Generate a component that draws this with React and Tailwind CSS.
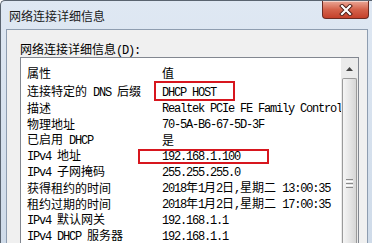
const rows = [
  ['连接特定的 DNS 后缀', 'DHCP HOST'],
  ['描述', 'Realtek PCIe FE Family Controller'],
  ['物理地址', '70-5A-B6-67-5D-3F'],
  ['已启用 DHCP', '是'],
  ['IPv4 地址', '192.168.1.100'],
  ['IPv4 子网掩码', '255.255.255.0'],
  ['获得租约的时间', '2018年1月2日,星期二 13:00:35'],
  ['租约过期的时间', '2018年1月2日,星期二 17:00:35'],
  ['IPv4 默认网关', '192.168.1.1'],
  ['IPv4 DHCP 服务器', '192.168.1.1'],
];

// Split into CJK and ASCII runs so ASCII gets the narrow 6px-per-char mono look
function T({ text }) {
  const parts = text.match(/[\x00-\x7f]+|[^\x00-\x7f]+/g) || [];
  return parts.map((p, i) =>
    /^[\x00-\x7f]/.test(p) ? (
      <span
        key={i}
        className="font-['Liberation_Mono',monospace] text-[12px] leading-[16px] tracking-[-1.2px] whitespace-pre"
      >
        {p}
      </span>
    ) : (
      <span key={i} className="leading-[16px]">{p}</span>
    )
  );
}

function CloseButton() {
  return (
    <div className="mr-[3px] flex h-[18px] w-[47px] items-center justify-center self-start rounded-b-[4px] border border-t-0 border-[#6b2b22] bg-gradient-to-b from-[#e9a797] via-[#d4624b] to-[#c4402a] shadow-[inset_0_1px_0_rgba(255,255,255,0.5)]">
      <svg width="14" height="12" viewBox="0 0 14 12">
        <path d="M3 2 L11 10 M11 2 L3 10" stroke="#4a1b14" strokeWidth="4" strokeLinecap="square" />
        <path d="M3 2 L11 10 M11 2 L3 10" stroke="#ffffff" strokeWidth="2.2" strokeLinecap="square" />
      </svg>
    </div>
  );
}

function ScrollBar() {
  return (
    <div className="flex w-[17px] flex-col bg-[#ebebeb]">
      <div className="flex h-[20px] items-center justify-center pt-[2px]">
        <svg width="7" height="4" viewBox="0 0 7 4">
          <path d="M0 4 L3.5 0 L7 4 Z" fill="#444" />
        </svg>
      </div>
      <div className="mx-[1px] flex flex-1 flex-col items-center rounded-t-[2px] border border-b-0 border-[#9a9a9a] bg-gradient-to-r from-[#f5f5f5] via-[#e6e6e6] to-[#d6d6d6] pt-[100px]">
        <div className="flex flex-col gap-[1px]">
          <div className="h-[1px] w-[7px] bg-[#8a8a8a]" />
          <div className="h-[1px] w-[7px] bg-[#fff]" />
          <div className="h-[1px] w-[7px] bg-[#8a8a8a]" />
          <div className="h-[1px] w-[7px] bg-[#fff]" />
          <div className="h-[1px] w-[7px] bg-[#8a8a8a]" />
        </div>
      </div>
    </div>
  );
}

export default function App() {
  return (
    <div className="relative h-[250px] w-[372px] overflow-hidden bg-white font-['Noto_Sans_CJK_SC',sans-serif] text-[12px] text-black">
      <div className="flex h-[243px] flex-col rounded-tl-[5px] border-l border-t border-[#5a6470] bg-gradient-to-b from-[#dfe8f3] to-[#cfdbe9]">
        {/* Title bar */}
        <div className="flex h-[28px] shrink-0 items-center justify-between">
          <span className="pl-[8px] pt-[2px] leading-[16px] text-[#1a1a1a]">网络连接详细信息</span>
          <CloseButton />
        </div>

        {/* Client area */}
        <div className="ml-[5px] mr-[4px] flex flex-1 flex-col overflow-hidden border border-b-0 border-[#8e9db0] bg-[#f0f0f0] pl-[13px] pr-[8px]">
          <div className="h-[27px] shrink-0 pt-[11px] leading-[16px]">
            <T text="网络连接详细信息(D):" />
          </div>

          <div className="flex flex-1 overflow-hidden border border-b-0 border-[#828790] bg-white">
            <div className="flex flex-1 flex-col overflow-hidden">
              <div className="flex h-[26px] shrink-0 items-end pb-[3px] pl-[6px] leading-[16px]">
                <div className="w-[135px]">属性</div>
                <div>值</div>
              </div>
              {rows.map(([k, v]) => (
                <div key={k} className="flex h-[16px] shrink-0 items-center overflow-hidden pl-[6px] leading-[16px]">
                  <div className="w-[135px] shrink-0 whitespace-nowrap">
                    <T text={k} />
                  </div>
                  <div className="flex-1 overflow-hidden whitespace-nowrap">
                    <T text={v} />
                  </div>
                </div>
              ))}
            </div>
            <ScrollBar />
          </div>
        </div>
      </div>

      {/* Red annotation boxes */}
      <div className="absolute left-[154px] top-[81px] h-[20px] w-[81px] border-2 border-[#d7161e]" />
      <div className="absolute left-[138px] top-[149px] h-[15px] w-[131px] border-2 border-[#d7161e]" />
    </div>
  );
}
